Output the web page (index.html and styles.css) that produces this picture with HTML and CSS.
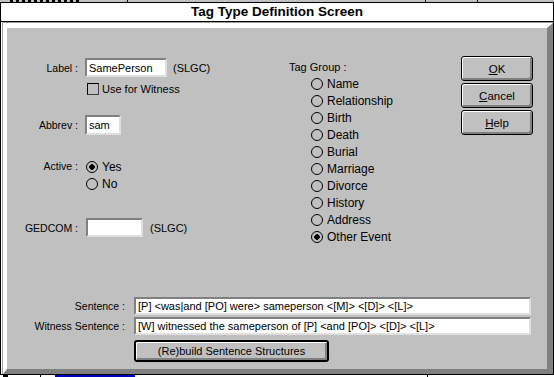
FILE: index.html
```html
<!DOCTYPE html>
<html lang="en">
<head>
    <meta charset="UTF-8">
    <title>Tag Type Definition Screen</title>
    <link rel="stylesheet" href="styles.css">
</head>
<body>
    <div class="behind-top">
        <span class="scrap scrap-text"></span>
        <span class="scrap divider d1"></span>
        <span class="scrap divider d2"></span>
        <span class="scrap divider d3"></span>
    </div>

    <div class="window">
        <div class="title">Tag Type Definition Screen</div>
        <div class="frame">
            <div class="bevel">
                <div class="panel">
                    <div class="top">
                        <div class="form">
                            <div class="row">
                                <span class="lbl">Label :</span>
                                <input class="field field-label" type="text" value="SamePerson">
                                <span class="hint">(SLGC)</span>
                            </div>
                            <div class="row row-check">
                                <span class="check"></span>
                                <span>Use for Witness</span>
                            </div>
                            <div class="row row-abbrev">
                                <span class="lbl">Abbrev :</span>
                                <input class="field field-abbrev" type="text" value="sam">
                            </div>
                            <div class="row row-active">
                                <span class="lbl lbl-top">Active :</span>
                                <div class="radios">
                                    <div class="opt"><span class="radio on"></span>Yes</div>
                                    <div class="opt"><span class="radio"></span>No</div>
                                </div>
                            </div>
                            <div class="row row-gedcom">
                                <span class="lbl">GEDCOM :</span>
                                <input class="field field-gedcom" type="text" value="">
                                <span class="hint">(SLGC)</span>
                            </div>
                        </div>

                        <div class="group">
                            <div class="group-title">Tag Group :</div>
                            <div class="opt"><span class="radio"></span>Name</div>
                            <div class="opt"><span class="radio"></span>Relationship</div>
                            <div class="opt"><span class="radio"></span>Birth</div>
                            <div class="opt"><span class="radio"></span>Death</div>
                            <div class="opt"><span class="radio"></span>Burial</div>
                            <div class="opt"><span class="radio"></span>Marriage</div>
                            <div class="opt"><span class="radio"></span>Divorce</div>
                            <div class="opt"><span class="radio"></span>History</div>
                            <div class="opt"><span class="radio"></span>Address</div>
                            <div class="opt"><span class="radio on"></span>Other Event</div>
                        </div>

                        <div class="actions">
                            <button class="btn"><u>O</u>K</button>
                            <button class="btn"><u>C</u>ancel</button>
                            <button class="btn"><u>H</u>elp</button>
                        </div>
                    </div>

                    <div class="sentences">
                        <span class="lbl-wide">Sentence :</span>
                        <input class="field field-wide" type="text" value="[P] <was|and [PO] were> sameperson <[M]> <[D]> <[L]>">
                        <span class="lbl-wide">Witness Sentence :</span>
                        <input class="field field-wide" type="text" value="[W] witnessed the sameperson of [P] <and [PO]> <[D]> <[L]>">
                        <span></span>
                        <button class="btn btn-default">(Re)build Sentence Structures</button>
                    </div>
                </div>
            </div>
        </div>
    </div>

    <div class="behind-bottom">
        <span class="tick t1"></span>
        <span class="tick t2"></span>
        <span class="link-scrap"></span>
        <span class="tick t3"></span>
    </div>
</body>
</html>
```

FILE: styles.css
```css
body {
    margin: 0;
    width: 554px;
    height: 377px;
    overflow: hidden;
    background: #c0c0c0;
    font-family: 'Liberation Sans', Arial, sans-serif;
    font-size: 11px;
    color: #000;
}

/* bits of the window behind */
.behind-top {
    height: 2px;
    display: flex;
}

.scrap {
    height: 2px;
}

.scrap-text {
    width: 70px;
    margin-left: 10px;
    background: repeating-linear-gradient(90deg, #000 0 3px, transparent 3px 6px);
}

.divider {
    width: 1px;
    background: #000;
}

.d1 { margin-left: 47px; }
.d2 { margin-left: 297px; }
.d3 { margin-left: 51px; }

.behind-bottom {
    height: 2px;
    display: flex;
    background: #fff;
}

.tick {
    width: 1px;
    height: 2px;
    background: #000;
}

.t1 { margin-left: 3px; width: 5px; }
.t2 { margin-left: 32px; }
.t3 { margin-left: 292px; }

.link-scrap {
    width: 80px;
    height: 2px;
    margin-left: 14px;
    background: #0000c0;
}

/* dialog window */
.window {
    border: 1px solid #000;
    background: #fff;
}

.title {
    height: 18px;
    line-height: 18px;
    border-bottom: 1px solid #000;
    text-align: center;
    font-weight: bold;
    font-size: 13.5px;
}

.frame {
    margin-left: 1px;
    border-top: 1px solid #a0a0a0;
    border-left: 1px solid #a0a0a0;
}

.bevel {
    border-top: 5px solid #fff;
    border-left: 4px solid #fff;
    border-right: 6px solid #808080;
    border-bottom: 5px solid #808080;
}

.panel {
    height: 341px;
    background: #c0c0c0;
}

.top {
    display: flex;
    height: 269px;
}

/* left form */
.form {
    width: 282px;
    padding-top: 30px;
    box-sizing: border-box;
}

.row {
    display: flex;
    align-items: center;
    height: 19px;
}

.lbl {
    width: 71px;
    margin-right: 7px;
    text-align: right;
    font-size: 10.5px;
}

.field {
    box-sizing: border-box;
    height: 19px;
    margin: 0;
    padding: 0 2px;
    border: 2px solid;
    border-color: #808080 #dfdfdf #dfdfdf #808080;
    background: #fff;
    font-family: 'Liberation Sans', Arial, sans-serif;
    font-size: 11px;
    color: #000;
    outline: none;
}

.field-label { width: 82px; }
.field-abbrev { width: 36px; height: 20px; }
.field-gedcom { width: 57px; margin-left: 1px; }

.hint {
    margin-left: 6px;
}

.row-gedcom .hint {
    margin-left: 7px;
}

.row-check {
    height: 13px;
    margin-top: 5px;
    padding-left: 80px;
    gap: 3px;
}

.check {
    width: 12px;
    height: 12px;
    box-sizing: border-box;
    border: 1px solid #000;
    border-right-color: #404040;
    border-bottom-color: #404040;
}

.row-abbrev {
    height: 20px;
    margin-top: 20px;
}

.row-active {
    height: auto;
    margin-top: 23px;
    align-items: flex-start;
}

.lbl-top {
    line-height: 17px;
    margin-right: 8px;
}

.row-gedcom {
    margin-top: 26px;
}

/* radio options */
.opt {
    display: flex;
    align-items: center;
    gap: 4px;
    height: 17px;
    font-size: 12px;
}

.radio {
    width: 12px;
    height: 12px;
    box-sizing: border-box;
    border: 1px solid #000;
    border-radius: 50%;
}

.radio.on {
    background: radial-gradient(circle, #000 0 2.5px, transparent 3px);
}

/* tag group column */
.group {
    width: 172px;
    padding-top: 32px;
    box-sizing: border-box;
}

.group-title {
    height: 15px;
    line-height: 15px;
}

.group .opt {
    padding-left: 22px;
}

/* buttons */
.actions {
    width: 72px;
    padding-top: 28px;
    display: flex;
    flex-direction: column;
    gap: 2px;
}

.btn {
    height: 25px;
    margin: 0;
    padding: 0;
    border: 1px solid #000;
    border-radius: 3px;
    background: #c0c0c0;
    box-shadow: inset 1px 1px #fff, inset -2px -2px #808080;
    font-family: 'Liberation Sans', Arial, sans-serif;
    font-size: 11.5px;
    color: #000;
}

.btn-default {
    width: 195px;
    height: 22px;
    margin-top: 3px;
    border-width: 2px;
    font-size: 11px;
}

/* sentence rows */
.sentences {
    display: grid;
    grid-template-columns: 118px 397px;
    column-gap: 9px;
    row-gap: 2px;
    align-items: center;
}

.lbl-wide {
    text-align: right;
    font-size: 10.5px;
}

.field-wide {
    width: 397px;
    height: 18px;
}
```
